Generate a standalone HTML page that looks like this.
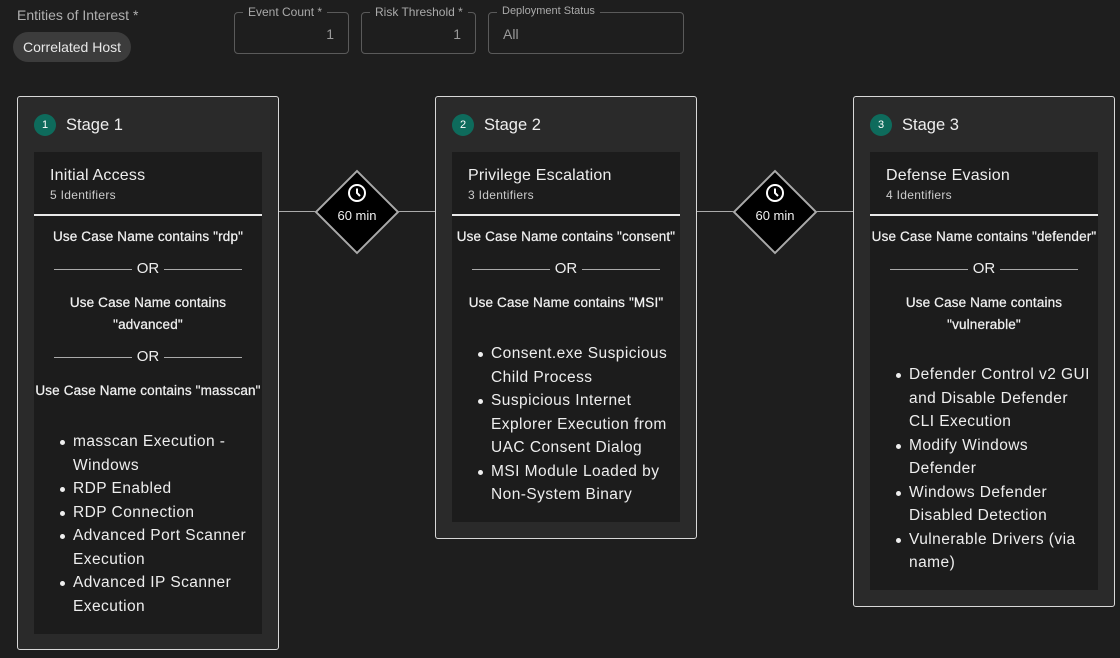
<!DOCTYPE html>
<html><head><meta charset="utf-8"><style>
*{margin:0;padding:0;box-sizing:border-box}
body{width:1120px;height:658px;background:#1e1e1e;font-family:"Liberation Sans",sans-serif;color:#e6e6e6;position:relative;overflow:hidden}
.a{position:absolute;white-space:nowrap}
.fld{position:absolute;border:1px solid #5a5a5a;border-radius:4px;height:42px;top:12px}
.fld .lb{position:absolute;top:-8px;left:8px;background:#1e1e1e;padding:0 5px;font-size:12px;color:#aaa}
.fld .v{position:absolute;top:13px;font-size:14px;color:#9a9a9a}
.card{position:absolute;top:96px;width:262px;background:#2a2a2a;border:1.5px solid #d8d8d8;border-radius:3px}
.num{position:absolute;left:16px;top:17px;width:22px;height:22px;border-radius:50%;background:#0e6b5c;color:#fff;font-size:11px;text-align:center;line-height:22px}
.st{position:absolute;left:48px;top:19px;font-size:16.5px;color:#eee}
.in{position:absolute;left:16px;top:55px;width:228px;background:#1c1c1c}
.t1{position:absolute;left:16px;top:15px;font-size:16px;color:#eee;letter-spacing:0.2px}
.t2{position:absolute;left:16px;top:36px;font-size:12px;color:#ccc;letter-spacing:0.3px}
.hr{position:absolute;left:0;right:0;top:62px;height:1.5px;background:#e8e8e8}
.c{position:absolute;left:0;width:228px;text-align:center;font-size:13.5px;color:#f0f0f0;letter-spacing:0.15px;-webkit-text-stroke:0.25px #f0f0f0}
.or{position:absolute;left:20px;width:188px;text-align:center;font-size:15px;color:#eee}
.or:before,.or:after{content:"";position:absolute;top:9px;width:78px;height:1px;background:#aaa}
.or:before{left:0}.or:after{right:0}
.bl{position:absolute;left:39px;top:0;font-size:15.5px;line-height:23.5px;color:#eee;letter-spacing:0.45px}
.bl div{position:relative;white-space:nowrap}
.bl .d:before{content:"";position:absolute;left:-13px;top:10px;width:5px;height:5px;border-radius:50%;background:#eee}
.line{position:absolute;top:211px;height:1px;background:#aaa}
.dia{position:absolute;top:182px;width:60px;height:60px;background:#000;border:2px solid #aaa;transform:rotate(45deg)}
.dt{position:absolute;top:208px;width:84px;text-align:center;font-size:13px;color:#eee}
</style></head><body>
<div class="a" style="left:17px;top:7px;font-size:14px;color:#b0b0b0">Entities of Interest *</div>
<div class="a" style="left:13px;top:32px;width:118px;height:30px;border-radius:15px;background:#3c3c3c;font-size:14px;color:#e8e8e8;text-align:center;line-height:30px">Correlated Host</div>
<div class="fld" style="left:234px;width:115px"><span class="lb">Event Count *</span><span class="v" style="right:14px">1</span></div>
<div class="fld" style="left:361px;width:115px"><span class="lb">Risk Threshold *</span><span class="v" style="right:14px">1</span></div>
<div class="fld" style="left:488px;width:196px"><span class="lb" style="font-size:11px;top:-8px">Deployment Status</span><span class="v" style="left:14px">All</span></div>

<div class="line" style="left:278px;width:157px"></div>
<div class="line" style="left:696px;width:157px"></div>
<div class="dia" style="left:327px"></div>
<div class="dia" style="left:745px"></div>
<svg class="a" style="left:347px;top:183px" width="20" height="20" viewBox="0 0 20 20"><circle cx="10" cy="10" r="8" fill="none" stroke="#fff" stroke-width="2"/><path d="M10 5.5V10l3 3" fill="none" stroke="#fff" stroke-width="2"/></svg>
<svg class="a" style="left:765px;top:183px" width="20" height="20" viewBox="0 0 20 20"><circle cx="10" cy="10" r="8" fill="none" stroke="#fff" stroke-width="2"/><path d="M10 5.5V10l3 3" fill="none" stroke="#fff" stroke-width="2"/></svg>
<div class="dt" style="left:315px">60 min</div>
<div class="dt" style="left:733px">60 min</div>

<div class="card" style="left:17px;height:554px">
<div class="num">1</div><div class="st">Stage 1</div>
<div class="in" style="height:482px">
<div class="t1">Initial Access</div><div class="t2">5 Identifiers</div><div class="hr"></div>
<div class="c" style="top:77px">Use Case Name contains "rdp"</div>
<div class="or" style="top:108px">OR</div>
<div class="c" style="top:143px">Use Case Name contains</div>
<div class="c" style="top:165px">"advanced"</div>
<div class="or" style="top:196px">OR</div>
<div class="c" style="top:231px">Use Case Name contains "masscan"</div>
<div class="bl" style="top:278px">
<div class="d">masscan Execution -</div><div>Windows</div>
<div class="d">RDP Enabled</div>
<div class="d">RDP Connection</div>
<div class="d">Advanced Port Scanner</div><div>Execution</div>
<div class="d">Advanced IP Scanner</div><div>Execution</div>
</div></div></div>

<div class="card" style="left:435px;height:443px">
<div class="num">2</div><div class="st">Stage 2</div>
<div class="in" style="height:370px">
<div class="t1">Privilege Escalation</div><div class="t2">3 Identifiers</div><div class="hr"></div>
<div class="c" style="top:77px">Use Case Name contains "consent"</div>
<div class="or" style="top:108px">OR</div>
<div class="c" style="top:143px">Use Case Name contains "MSI"</div>
<div class="bl" style="top:190px">
<div class="d">Consent.exe Suspicious</div><div>Child Process</div>
<div class="d">Suspicious Internet</div><div>Explorer Execution from</div><div>UAC Consent Dialog</div>
<div class="d">MSI Module Loaded by</div><div>Non-System Binary</div>
</div></div></div>

<div class="card" style="left:853px;height:511px">
<div class="num">3</div><div class="st">Stage 3</div>
<div class="in" style="height:438px">
<div class="t1">Defense Evasion</div><div class="t2">4 Identifiers</div><div class="hr"></div>
<div class="c" style="top:77px">Use Case Name contains "defender"</div>
<div class="or" style="top:108px">OR</div>
<div class="c" style="top:143px">Use Case Name contains</div>
<div class="c" style="top:165px">"vulnerable"</div>
<div class="bl" style="top:211px">
<div class="d">Defender Control v2 GUI</div><div>and Disable Defender</div><div>CLI Execution</div>
<div class="d">Modify Windows</div><div>Defender</div>
<div class="d">Windows Defender</div><div>Disabled Detection</div>
<div class="d">Vulnerable Drivers (via</div><div>name)</div>
</div></div></div>
</body></html>
